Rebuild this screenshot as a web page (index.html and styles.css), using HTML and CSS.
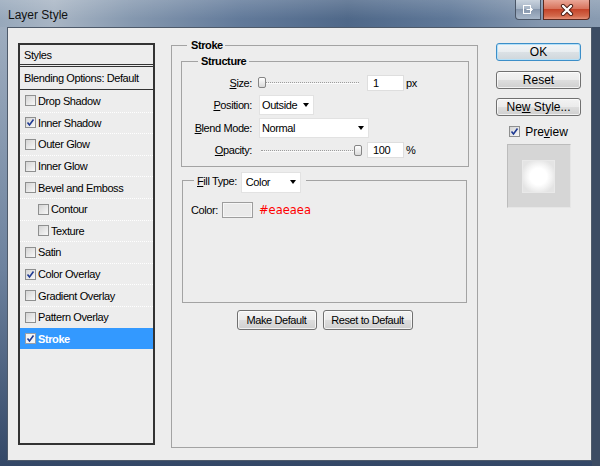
FILE: index.html
```html
<!DOCTYPE html>
<html lang="en">
<head>
<meta charset="utf-8">
<title>Layer Style</title>
<link rel="stylesheet" href="styles.css">
</head>
<body>
<div class="window">
  <div class="titlebar">
    <span class="title">Layer Style</span>
    <div class="winbtns">
      <div class="wbtn restore">
        <svg width="12" height="11" viewBox="0 0 12 11"><rect x="1.5" y="1.5" width="7" height="8" fill="none" stroke="#fff"/><path d="M4.5 5.5h6M8.5 3.5l2 2-2 2" fill="none" stroke="#fff"/></svg>
      </div>
      <div class="wbtn close">
        <svg width="14" height="12" viewBox="0 0 14 12"><path d="M3 2l8 8M11 2l-8 8" stroke="#4a1d14" stroke-width="4.2" stroke-linecap="round"/><path d="M3 2l8 8M11 2l-8 8" stroke="#fff" stroke-width="2.4" stroke-linecap="round"/></svg>
      </div>
    </div>
  </div>
  <div class="frame">
    <div class="client">
      <div class="styles-list">
        <div class="sl-head">Styles</div>
        <div class="sl-blend">Blending Options: Default</div>
        <div class="sl-row"><span class="cb"></span>Drop Shadow</div>
        <div class="sl-row"><span class="cb"><svg viewBox="0 0 9 9"><path d="M1.5 4.5l2 2.5 4-5.5"/></svg></span>Inner Shadow</div>
        <div class="sl-row"><span class="cb"></span>Outer Glow</div>
        <div class="sl-row"><span class="cb"></span>Inner Glow</div>
        <div class="sl-row"><span class="cb"></span>Bevel and Emboss</div>
        <div class="sl-row sub"><span class="cb"></span>Contour</div>
        <div class="sl-row sub"><span class="cb"></span>Texture</div>
        <div class="sl-row"><span class="cb"></span>Satin</div>
        <div class="sl-row"><span class="cb"><svg viewBox="0 0 9 9"><path d="M1.5 4.5l2 2.5 4-5.5"/></svg></span>Color Overlay</div>
        <div class="sl-row"><span class="cb"></span>Gradient Overlay</div>
        <div class="sl-row"><span class="cb"></span>Pattern Overlay</div>
        <div class="sl-row sel"><span class="cb"><svg viewBox="0 0 9 9"><path d="M1.5 4.5l2 2.5 4-5.5"/></svg></span>Stroke</div>
      </div>

      <fieldset class="group main">
        <legend>Stroke</legend>
        <fieldset class="group structure">
          <legend>Structure</legend>
          <div class="srows">
            <div class="srow">
              <span class="lbl"><u>S</u>ize:</span>
              <div class="slider"><span class="thumb" style="left:0px"></span></div>
              <span class="num">1</span><span class="unit">px</span>
            </div>
            <div class="srow tall">
              <span class="lbl"><u>P</u>osition:</span>
              <div class="select sel-position">Outside</div>
            </div>
            <div class="srow tall">
              <span class="lbl"><u>B</u>lend Mode:</span>
              <div class="select sel-blend">Normal</div>
            </div>
            <div class="srow">
              <span class="lbl"><u>O</u>pacity:</span>
              <div class="slider"><span class="thumb" style="left:96px"></span></div>
              <span class="num">100</span><span class="unit">%</span>
            </div>
          </div>
        </fieldset>

        <fieldset class="group fill">
          <legend><span class="fill-lbl"><u>F</u>ill Type:</span><span class="select sel-fill">Color</span></legend>
          <div class="fill-body">
            <div class="color-row">
              <span>Color:</span>
              <span class="swatch"></span>
              <span class="hex">#eaeaea</span>
            </div>
          </div>
        </fieldset>

        <div class="btnrow">
          <div class="btn small w80">Make Default</div>
          <div class="btn small w90">Reset to Default</div>
        </div>
      </fieldset>

      <div class="side">
        <div class="btn default">OK</div>
        <div class="btn">Reset</div>
        <div class="btn"><span>Ne<u>w</u> Style...</span></div>
        <div class="preview-row">
          <span class="cb"><svg viewBox="0 0 9 9"><path d="M1.5 4.5l2 2.5 4-5.5"/></svg></span>
          <span>Pre<u>v</u>iew</span>
        </div>
        <div class="preview-box"><div class="preview-square"></div></div>
      </div>
    </div>
  </div>
</div>
</body>
</html>
```

FILE: styles.css
```css
* { box-sizing: border-box; }
body { margin: 0; font-family: "Liberation Sans", Arial, sans-serif; font-size: 11px; color: #000; }

.window { width: 600px; height: 466px; display: flex; flex-direction: column; overflow: hidden; background: #3e5170; }

.titlebar {
  flex: none; height: 27px; display: flex; align-items: flex-start;
  background:
    linear-gradient(180deg, rgba(255,255,255,.16), rgba(255,255,255,0) 70%),
    linear-gradient(90deg, #97a8bb 0%, #a8b5c4 9%, #8598af 22%, #627a9a 40%, #4f6889 58%, #5f7898 75%, #8396ae 90%, #899bb1 100%);
}
.title { font-size: 12px; line-height: 14px; padding: 8px 0 0 8px; color: #111; }
.winbtns { margin-left: auto; margin-right: 10px; display: flex; gap: 2px; }
.wbtn { height: 20px; display: flex; align-items: center; justify-content: center; border: 1px solid #4a5566; border-top: none; }
.restore { width: 26px; border-radius: 0 0 0 4px; background: linear-gradient(180deg, #c9d3de 0%, #a6b4c5 45%, #8797ad 50%, #a7b6c8 100%); }
.close { width: 47px; border-color: #5c2a1f; border-radius: 0 0 4px 0; background: linear-gradient(180deg, #eaa898 0%, #d8745d 45%, #c5452a 50%, #d36a4c 85%, #e6927a 100%); }

.frame { flex: 1; display: flex; padding: 0 0 5px 7px; border-right: 8px solid #3c4c63; background: linear-gradient(180deg, #9eadbf 0%, #6d829e 55%, #334766 100%); }
.client { flex: 1; display: flex; align-items: flex-start; background: #ededed; border: 1px solid #4e5a6a; padding: 11px 0 0 10px; letter-spacing: -0.4px; }

/* checkbox */
.cb { width: 11px; height: 11px; flex: none; border: 1px solid #8e8f8f; background: linear-gradient(135deg, #d4d4d4, #f8f8f8); display: flex; align-items: center; justify-content: center; }
.cb svg { width: 9px; height: 9px; fill: none; stroke: #1f3a93; stroke-width: 1.6; }

/* styles list */
.styles-list { width: 137px; height: 402px; margin-top: 4px; border: 2px solid #333; display: flex; flex-direction: column; flex: none; }
.sl-head { height: 22px; border-bottom: 3px double #333; padding-left: 4px; display: flex; align-items: center; }
.sl-blend { height: 23px; border-bottom: 1px solid #333; padding-left: 4px; display: flex; align-items: center; }
.sl-row { height: 21.6px; display: flex; align-items: center; padding-left: 5px; border-top: 1px dotted #ffffff; }
.sl-blend + .sl-row { border-top: none; }
.sl-row .cb { margin-right: 2px; }
.sl-row.sub { padding-left: 18px; }
.sl-row.sel { background: #3399ff; color: #fff; font-weight: bold; border-top-color: #3399ff; }
.sl-row.sel .cb { background: #f4f4f4; border-color: #9aa0a8; }

/* group boxes */
.group { margin: 0; padding: 0; border: 1px solid #a3a3a3; min-width: 0; }
.group > legend { padding: 0 3px; font-weight: bold; line-height: 13px; }
.main { width: 307px; height: 409px; margin-left: 16px; flex: none; }
.main > legend { margin-left: 15px; padding: 0 2px 0 4px; }
.structure { margin: 3px 8px 0 9px; padding: 6px 0 7px; }
.structure > legend { margin-left: 16px; }

.srows { display: flex; flex-direction: column; gap: 3.5px; }
.srow { display: flex; align-items: center; height: 17px; }
.srow.tall { height: 20px; }
.lbl { width: 70px; text-align: right; margin-right: 6px; flex: none; }

.slider { position: relative; width: 104px; height: 17px; margin-right: 5px; flex: none; }
.slider::before { content: ""; position: absolute; left: 3px; right: 3px; top: 8px; border-top: 1px dotted #9c9c9c; border-bottom: 1px solid #fafafa; }
.thumb { position: absolute; top: 3px; width: 8px; height: 11px; border: 1px solid #858585; border-radius: 2px; background: linear-gradient(180deg, #ffffff, #d9d9d9); }

.num { width: 37px; height: 16px; background: #fff; border: 1px solid #dedede; padding-left: 5px; line-height: 14px; }
.unit { margin-left: 2px; }

.select { display: flex; align-items: center; height: 20px; background: #fff; border: 1px solid #e2e2e2; padding: 0 4px 0 2px; margin-left: 1px; }
.select::after { content: ""; margin-left: auto; border-left: 3.5px solid transparent; border-right: 3.5px solid transparent; border-top: 4px solid #000; }
.sel-position { width: 55px; }
.sel-blend { width: 110px; }
.sel-fill { width: 60px; height: 21px; margin: 0 0 -4px 0; padding-left: 4px; }

.fill { margin: 5px 10px 0 10px; }
.fill > legend { margin-left: 11px; padding: 0 5px 0 3px; display: flex; align-items: flex-start; font-weight: normal; }
.fill-lbl { padding-top: 3px; line-height: 13px; margin-right: 4px; }
.fill-body { height: 113px; padding: 13px 0 0 8px; }
.color-row { display: flex; align-items: center; height: 16px; }
.swatch { width: 31px; height: 16px; margin-left: 4px; border: 1px solid #9d9d9d; background: #eaeaea; box-shadow: inset 0 0 0 1px #f6f6f6; }
.hex { margin-left: 6px; font-family: "DejaVu Sans", Verdana, sans-serif; font-size: 11.5px; color: #ff0000; letter-spacing: 0; }

.btnrow { display: flex; justify-content: center; gap: 6px; margin-top: 7px; }

/* buttons */
.btn { display: flex; align-items: center; justify-content: center; border: 1px solid #707070; border-radius: 3px; background: linear-gradient(180deg, #f3f3f3 0%, #ebebeb 48%, #dddddd 52%, #cfcfcf 100%); box-shadow: inset 0 0 0 1px rgba(255,255,255,.7); color: #000; }
.btn.small { height: 20px; font-size: 11px; }
.w80 { width: 80px; }
.w90 { width: 90px; }
.btn.default { border-color: #3c8ec8; box-shadow: inset 0 0 0 1px #b4e0f8; background: linear-gradient(180deg, #f3f5f7 0%, #e9edf0 48%, #dbe1e5 52%, #cfd6db 100%); }

.side { width: 85px; margin: 4px 0 0 18px; display: flex; flex-direction: column; align-items: center; letter-spacing: 0; font-size: 12px; flex: none; }
.side .btn { width: 85px; height: 18px; }
.side .btn + .btn { margin-top: 9.5px; }
.preview-row { margin-top: 9px; height: 13px; display: flex; align-items: center; gap: 5px; }
.preview-box { margin-top: 6px; width: 64px; height: 64px; display: flex; align-items: center; justify-content: center; background: #d6d6d6; border: 1px solid; border-color: #bcbcbc #e6e6e6 #e6e6e6 #bcbcbc; }
.preview-square { width: 33px; height: 33px; border: 1px solid #e9e9e9; background: radial-gradient(circle, #ffffff 0%, #ffffff 38%, #f3f3f3 58%, #e4e4e4 80%); }
```
